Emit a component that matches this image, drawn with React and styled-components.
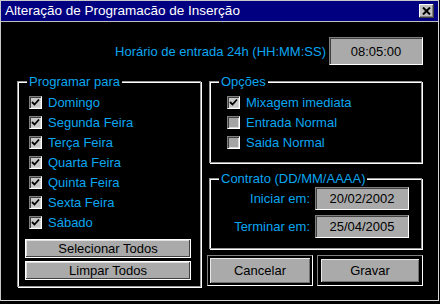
import React from 'react';
import styled, { createGlobalStyle } from 'styled-components';

const GlobalStyle = createGlobalStyle`
  html, body {
    margin: 0;
    padding: 0;
    background: #000;
  }
  body {
    font-family: "Liberation Sans", Arial, sans-serif;
    font-size: 13px;
  }
`;

const BLUE = '#0aa6f0';
const FACE = '#aaaaaa';

const Window = styled.div`
  width: 439px;
  height: 301px;
  box-sizing: border-box;
  border: 1px solid #c8c8c8;
  border-right-color: #d8d8d8;
  border-bottom-color: #d8d8d8;
  background: #000;
  display: flex;
  flex-direction: column;
`;

const TitleBar = styled.div`
  height: 20px;
  background: #000080;
  border-bottom: 1px solid #c0c0c0;
  display: flex;
  align-items: center;
  justify-content: space-between;
  padding: 0 4px 0 4px;
`;

const Title = styled.span`
  color: #fff;
  font-size: 13.5px;
  line-height: 20px;
`;

const CloseButton = styled.button`
  width: 15px;
  height: 14px;
  padding: 0;
  margin: 0;
  background: #c0c0c0;
  border: none;
  box-shadow: inset -1px -1px 0 #404040, inset 1px 1px 0 #fff, inset -2px -2px 0 #808080;
  display: flex;
  align-items: center;
  justify-content: center;
`;

const Body = styled.div`
  padding: 15px 15px 0 16px;
  display: flex;
  flex-direction: column;
`;

const TimeRow = styled.div`
  display: flex;
  justify-content: flex-end;
  align-items: center;
  gap: 3px;
`;

const Label = styled.span`
  color: ${BLUE};
  font-size: 13px;
  white-space: nowrap;
`;

const Field = styled.div`
  width: ${(p) => p.$w}px;
  height: ${(p) => p.$h}px;
  box-sizing: border-box;
  background: ${FACE};
  border: 1px solid;
  border-color: #808080 #fff #fff #808080;
  box-shadow: inset 1px 1px 0 #404040;
  color: #000;
  display: flex;
  align-items: center;
  justify-content: center;
  font-size: 13px;
`;

const Columns = styled.div`
  display: flex;
  gap: 6px;
  margin-top: 16px;
`;

const Group = styled.div`
  position: relative;
  box-sizing: border-box;
  width: ${(p) => p.$w}px;
  height: ${(p) => p.$h}px;
  margin: ${(p) => p.$m || '0'};
  border: 1px solid #9a9a9a;
  box-shadow: inset 1px 1px 0 #fff, 1px 1px 0 #fff;
  padding: ${(p) => p.$pad};
  display: flex;
  flex-direction: column;
`;

const Caption = styled.span`
  position: absolute;
  top: -8px;
  left: 9px;
  padding: 0 2px;
  background: #000;
  color: ${BLUE};
  line-height: 15px;
  font-size: 13px;
`;

const CheckRow = styled.label`
  height: 20px;
  display: flex;
  align-items: center;
  gap: 6px;
  color: ${BLUE};
`;

const Box = styled.span`
  width: 13px;
  height: 13px;
  box-sizing: border-box;
  background: ${(p) => (p.$on ? '#c8c8c8' : '#a4a4a4')};
  border: 1px solid;
  border-color: #808080 #fff #fff #808080;
  box-shadow: inset 1px 1px 0 #404040, inset -1px -1px 0 #d8d8d8;
  display: flex;
  align-items: center;
  justify-content: center;
`;

const SmallButton = styled.button`
  width: 166px;
  height: 19px;
  margin: 0;
  padding: 0;
  font-family: inherit;
  font-size: 13px;
  color: #000;
  background: ${FACE};
  border: 1px solid #fff;
  box-shadow: inset -1px -1px 0 #404040, inset 1px 1px 0 #e0e0e0;
  & + & {
    margin-top: 3px;
  }
`;

const RightCol = styled.div`
  width: 216px;
  display: flex;
  flex-direction: column;
`;

const DateRow = styled.div`
  display: flex;
  justify-content: flex-end;
  align-items: center;
  gap: 5px;
  & + & {
    margin-top: 5px;
  }
`;

const ButtonRow = styled.div`
  display: flex;
  gap: 4px;
  margin-top: 6px;
`;

const BigButton = styled.button`
  width: 106px;
  height: 31px;
  margin: 0;
  padding: 0;
  font-family: inherit;
  font-size: 13px;
  color: #000;
  background: ${FACE};
  border: 1px solid;
  border-color: #808080 #fff #fff #808080;
  box-shadow: inset 0 0 0 ${(p) => (p.$default ? 3 : 2)}px #000,
    inset ${(p) => (p.$default ? 4 : 3)}px ${(p) => (p.$default ? 4 : 3)}px 0 #e8e8e8,
    inset -${(p) => (p.$default ? 4 : 3)}px -${(p) => (p.$default ? 4 : 3)}px 0 #707070;
`;

function Check({ on }) {
  return (
    <Box $on={on}>
      {on && (
        <svg width="9" height="9" viewBox="0 0 9 9">
          <path d="M1 4 L3.5 6.5 L8 1.5" fill="none" stroke="#000" strokeWidth="1.8" />
        </svg>
      )}
    </Box>
  );
}

const days = ['Domingo', 'Segunda Feira', 'Terça Feira', 'Quarta Feira', 'Quinta Feira', 'Sexta Feira', 'Sábado'];
const options = [
  { name: 'Mixagem imediata', on: true },
  { name: 'Entrada Normal', on: false },
  { name: 'Saida Normal', on: false },
];

export default function App() {
  return (
    <>
      <GlobalStyle />
      <Window>
        <TitleBar>
          <Title>Alteração de Programacão de Inserção</Title>
          <CloseButton>
            <svg width="9" height="8" viewBox="0 0 9 8">
              <path d="M1 0.5 L8 7.5 M8 0.5 L1 7.5" stroke="#000" strokeWidth="2" />
            </svg>
          </CloseButton>
        </TitleBar>
        <Body>
          <TimeRow>
            <Label>Horário de entrada 24h (HH:MM:SS)</Label>
            <Field $w={94} $h={28}>08:05:00</Field>
          </TimeRow>
          <Columns>
            <Group $w={184} $h={206} $pad="10px 0 0 11px">
              <Caption>Programar para</Caption>
              {days.map((d) => (
                <CheckRow key={d}>
                  <Check on />
                  {d}
                </CheckRow>
              ))}
              <div style={{ marginTop: 7, marginLeft: -4 }}>
                <SmallButton>Selecionar Todos</SmallButton>
                <SmallButton>Limpar Todos</SmallButton>
              </div>
            </Group>
            <RightCol>
              <Group $w={213} $h={82} $m="0 0 0 2px" $pad="10px 0 0 17px">
                <Caption>Opções</Caption>
                {options.map((o) => (
                  <CheckRow key={o.name}>
                    <Check on={o.on} />
                    {o.name}
                  </CheckRow>
                ))}
              </Group>
              <Group $w={213} $h={71} $m="15px 0 0 2px" $pad="8px 12px 0 0">
                <Caption>Contrato (DD/MM/AAAA)</Caption>
                <DateRow>
                  <Label>Iniciar em:</Label>
                  <Field $w={94} $h={23}>20/02/2002</Field>
                </DateRow>
                <DateRow>
                  <Label>Terminar em:</Label>
                  <Field $w={94} $h={23}>25/04/2005</Field>
                </DateRow>
              </Group>
              <ButtonRow>
                <BigButton>Cancelar</BigButton>
                <BigButton $default>Gravar</BigButton>
              </ButtonRow>
            </RightCol>
          </Columns>
        </Body>
      </Window>
    </>
  );
}
